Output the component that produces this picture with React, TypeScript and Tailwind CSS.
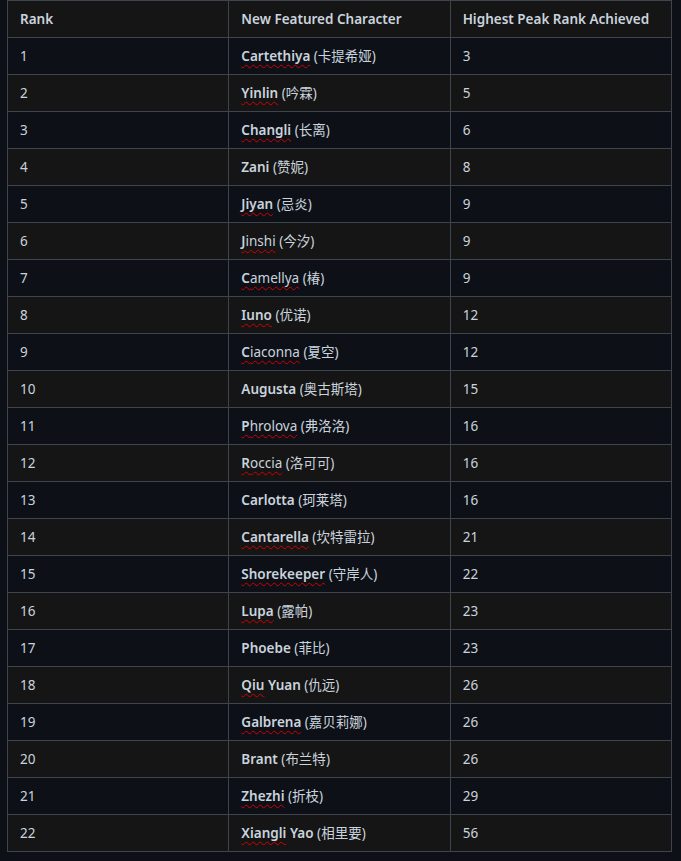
const rows: { name: string; bold: 'all' | 'first'; typo: boolean; extra?: string; zh: string; peak: number }[] = [
  { name: 'Cartethiya', bold: 'all', typo: true, zh: '卡提希娅', peak: 3 },
  { name: 'Yinlin', bold: 'all', typo: true, zh: '吟霖', peak: 5 },
  { name: 'Changli', bold: 'all', typo: true, zh: '长离', peak: 6 },
  { name: 'Zani', bold: 'all', typo: false, zh: '赞妮', peak: 8 },
  { name: 'Jiyan', bold: 'all', typo: true, zh: '忌炎', peak: 9 },
  { name: 'Jinshi', bold: 'first', typo: true, zh: '今汐', peak: 9 },
  { name: 'Camellya', bold: 'first', typo: true, zh: '椿', peak: 9 },
  { name: 'Iuno', bold: 'all', typo: true, zh: '优诺', peak: 12 },
  { name: 'Ciaconna', bold: 'first', typo: true, zh: '夏空', peak: 12 },
  { name: 'Augusta', bold: 'all', typo: false, zh: '奥古斯塔', peak: 15 },
  { name: 'Phrolova', bold: 'first', typo: true, zh: '弗洛洛', peak: 16 },
  { name: 'Roccia', bold: 'first', typo: true, zh: '洛可可', peak: 16 },
  { name: 'Carlotta', bold: 'all', typo: false, zh: '珂莱塔', peak: 16 },
  { name: 'Cantarella', bold: 'all', typo: true, zh: '坎特雷拉', peak: 21 },
  { name: 'Shorekeeper', bold: 'all', typo: true, zh: '守岸人', peak: 22 },
  { name: 'Lupa', bold: 'all', typo: true, zh: '露帕', peak: 23 },
  { name: 'Phoebe', bold: 'all', typo: false, zh: '菲比', peak: 23 },
  { name: 'Qiu', bold: 'all', typo: true, extra: ' Yuan', zh: '仇远', peak: 26 },
  { name: 'Galbrena', bold: 'all', typo: true, zh: '嘉贝莉娜', peak: 26 },
  { name: 'Brant', bold: 'all', typo: false, zh: '布兰特', peak: 26 },
  { name: 'Zhezhi', bold: 'all', typo: true, zh: '折枝', peak: 29 },
  { name: 'Xiangli', bold: 'all', typo: true, extra: ' Yao', zh: '相里要', peak: 56 },
];

const squiggle = 'underline decoration-wavy decoration-[#d40000] decoration-1 underline-offset-[3px]';

function Name({ r }: { r: (typeof rows)[number] }) {
  const word =
    r.bold === 'first' ? (
      <span className={r.typo ? squiggle : ''}>
        <strong className="font-semibold">{r.name[0]}</strong>
        {r.name.slice(1)}
      </span>
    ) : (
      <strong className={`font-semibold ${r.typo ? squiggle : ''}`}>{r.name}</strong>
    );
  return (
    <>
      {word}
      {r.extra && <strong className="font-semibold">{r.extra}</strong>} ({r.zh})
    </>
  );
}

export default function App() {
  return (
    <div
      className="min-h-[861px] bg-[#0d1117] pl-[7px] text-[13.5px] text-[#cad3dd]"
      style={{ fontFamily: '"Noto Sans", "Noto Sans CJK SC", sans-serif' }}
    >
      <table className="w-[665px] table-fixed border-collapse">
        <thead>
          <tr className="h-[37px] bg-[#151515]">
            <th className="border border-[#3d444d] px-[12px] text-left font-semibold">Rank</th>
            <th className="border border-[#3d444d] px-[12px] text-left font-semibold">New Featured Character</th>
            <th className="border border-[#3d444d] px-[12px] text-left font-semibold">Highest Peak Rank Achieved</th>
          </tr>
        </thead>
        <tbody>
          {rows.map((r, i) => (
            <tr key={r.name} className={`h-[37px] ${i % 2 === 0 ? 'bg-[#0d1117]' : 'bg-[#151515]'}`}>
              <td className="border border-[#3d444d] px-[12px]">{i + 1}</td>
              <td className="border border-[#3d444d] px-[12px]">
                <Name r={r} />
              </td>
              <td className="border border-[#3d444d] px-[12px]">{r.peak}</td>
            </tr>
          ))}
        </tbody>
      </table>
    </div>
  );
}
